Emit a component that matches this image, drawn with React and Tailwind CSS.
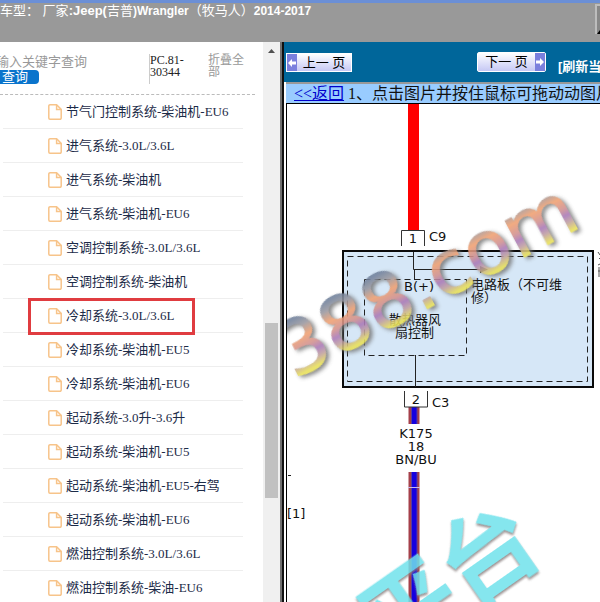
import React from 'react'

const items = [
  '节气门控制系统-柴油机-EU6',
  '进气系统-3.0L/3.6L',
  '进气系统-柴油机',
  '进气系统-柴油机-EU6',
  '空调控制系统-3.0L/3.6L',
  '空调控制系统-柴油机',
  '冷却系统-3.0L/3.6L',
  '冷却系统-柴油机-EU5',
  '冷却系统-柴油机-EU6',
  '起动系统-3.0升-3.6升',
  '起动系统-柴油机-EU5',
  '起动系统-柴油机-EU5-右驾',
  '起动系统-柴油机-EU6',
  '燃油控制系统-3.0L/3.6L',
  '燃油控制系统-柴油-EU6',
]

const selected = '冷却系统-3.0L/3.6L'

function FileIcon() {
  return (
    <svg width="14" height="16" viewBox="0 0 14 16" fill="none" stroke="#f7c48a" strokeWidth="1.5" className="shrink-0">
      <path d="M2 .8h6.600L13.200 5.400V14a1.200 1.200 0 0 1-1.200 1.200H2A1.200 1.200 0 0 1 .8 14V2A1.200 1.200 0 0 1 2 .8z" />
      <path d="M8.600 1v4.600h4.400" />
    </svg>
  )
}

function PageArrow({ left }) {
  return (
    <span className="flex w-[10px] items-center justify-center bg-[#7b80dd]">
      <svg width="8" height="8" viewBox="0 0 8 8" fill="#fff" className={left ? '' : 'rotate-180'}>
        <path d="M0 4l4-4v2.500h4v3H4V8z" />
      </svg>
    </span>
  )
}

function Header() {
  return (
    <header className="flex h-[42px] shrink-0 items-start justify-between border-t-3 border-[#6b8fd6] bg-[#999]">
      <h1 className="pt-px text-[13px] leading-[14px] whitespace-nowrap text-white">
        车型： 厂家<b>:Jeep(</b>吉普<b className="text-[12px]">)Wrangler</b>（牧马人）<b className="text-[12px]">2014-2017</b>
      </h1>
      <button type="button" aria-label="展开" className="mt-px h-[30px] w-[5px] border-t-2 border-l-2 border-[#bdbdbd] bg-[#888]">
        <svg width="3" height="28" viewBox="0 0 3 28">
          <path d="M0 28l3-4v4z" fill="#000" />
        </svg>
      </button>
    </header>
  )
}

function Sidebar() {
  return (
    <aside className="flex w-[284px] shrink-0 bg-white">
      <div className="min-w-0 flex-1 overflow-hidden">
        {/* 搜索栏 */}
        <form className="mr-2 flex h-[53px] items-start border-b border-dashed border-[#bbb] pt-3">
          <div className="w-[149px]">
            <input
              aria-label="输入关键字查询"
              placeholder="输入关键字查询"
              className="-ml-1 block h-4 w-full text-[13px] leading-4 outline-none placeholder:text-[#999]"
            />
            <button type="button" className="block h-[14px] w-[39px] rounded-r bg-[#0a74cc] pr-[11px] text-right text-[13px] leading-[14px] text-white">
              查询
            </button>
          </div>
          <div className="h-[30px] w-[59px] border-l border-[#ccc] font-['Liberation_Serif',serif] text-[12px] leading-[12px] text-[#222]">
            PC.81-
            <br />
            30344
          </div>
          <button type="button" className="w-10 text-left text-[12px] leading-[12px] text-[#999]">
            折叠全部
          </button>
        </form>
        {/* 目录列表 */}
        <ul className="mr-5 ml-[3px] font-['Liberation_Serif','Noto_Sans_CJK_SC',serif]">
          {items.map((item) => (
            <li key={item} className="relative h-[34px] border-b border-[#eee]">
              <a href="#" className="flex h-full items-center gap-1 pl-[45px] text-[13px] whitespace-nowrap text-[#1c2b48]">
                <FileIcon />
                {item}
              </a>
              {item === selected && (
                <span className="absolute -top-px left-[25px] h-[37px] w-[167px] border-3 border-[#e03c40]" />
              )}
            </li>
          ))}
        </ul>
      </div>
      {/* 滚动条 */}
      <div className="flex w-[17px] flex-col items-center bg-[#f0f0f0]">
        <svg width="7" height="4" viewBox="0 0 7 4" fill="#505050" className="mt-[7px]">
          <path d="M0 4L3.500 0 7 4z" />
        </svg>
        <div className="mt-[270px] h-[175px] w-[13px] bg-[#c1c1c1]" />
      </div>
      <div className="w-1 border-r-2 border-[#111] bg-[#707070]" />
    </aside>
  )
}

function Wire({ y, height }) {
  return (
    <g>
      <rect x="121.500" y={y} width="11" height={height} fill="#a5404a" />
      <rect x="124" y={y} width="6.500" height={height} fill="#5a3a9a" />
      <rect x="125" y={y} width="4.500" height={height} fill="#1400e0" />
    </g>
  )
}

function Diagram() {
  return (
    <svg className="block h-full w-full font-['DejaVu_Sans','Noto_Sans_CJK_SC',sans-serif]" fontSize="13" fill="#111">
      <defs>
        <linearGradient id="mark" x1="0" y1="0" x2="0" y2="1">
          <stop offset="0.18" stopColor="#71819b" />
          <stop offset="0.28" stopColor="#9a98a0" />
          <stop offset="0.4" stopColor="#f0a070" />
          <stop offset="0.52" stopColor="#d09090" />
          <stop offset="0.6" stopColor="#a878b8" />
          <stop offset="0.68" stopColor="#c0a0a0" />
          <stop offset="0.78" stopColor="#e8e058" />
        </linearGradient>
      </defs>

      {/* 电源线 */}
      <rect x="121" y="0" width="11" height="126" fill="#f00" />
      <path d="M114.500 142v-15.500h23V142" fill="none" stroke="#333" />
      <text x="126" y="139" textAnchor="middle">1</text>
      <text x="142" y="137">C9</text>

      {/* 电路板 */}
      <rect x="56" y="147" width="250" height="136" fill="#d6e7f7" stroke="#0a0a0a" strokeWidth="2" />
      <rect x="60.500" y="152.500" width="240" height="125" fill="none" stroke="#222" strokeDasharray="6 4" />
      <rect x="77.500" y="175.500" width="102" height="76" fill="none" stroke="#222" strokeDasharray="6 4" />
      <path d="M126.500 148v17.500H200M127.500 165v11M128.500 251v32" fill="none" stroke="#222" />
      <path d="M193 162l8 3.500-8 3.500z" />
      <text x="117" y="187">B(+)</text>
      <text x="102" y="220">散热器风</text>
      <text x="108" y="233">扇控制</text>
      <text x="184" y="185">电路板（不可维</text>
      <text x="184" y="198">修）</text>
      <path d="M311 148l2 3M312 155l1-1M311 161l2-1M311 167h2M312 163v10" stroke="#555" />

      {/* K175 */}
      <Wire y={303} height={17} />
      <path d="M117.500 287v16h23v-16" fill="none" stroke="#333" />
      <text x="129" y="300" textAnchor="middle">2</text>
      <text x="145" y="303">C3</text>
      <text x="129" y="334" textAnchor="middle">K175</text>
      <text x="129" y="347" textAnchor="middle">18</text>
      <text x="129" y="360" textAnchor="middle">BN/BU</text>
      <Wire y={368} height={400} />
      <path d="M121 383.500h12" stroke="#c9b8e8" />
      <path d="M1 371.500h3" stroke="#222" />
      <text x="0" y="414">[1]</text>

      {/* 水印 */}
      <text
        transform="translate(-35 298) rotate(-28)"
        fontSize="75"
        fill="url(#mark)"
        stroke="url(#mark)"
        strokeWidth="1"
        strokeLinejoin="round"
        opacity="0.88"
        className="drop-shadow-[2px_3px_2px_#777]"
      >
        7388.com
      </text>
      <text
        transform="translate(104 560) rotate(-35)"
        fontSize="95"
        fontWeight="bold"
        fill="#70e2ec"
        opacity="0.85"
        className="drop-shadow-[-1px_2px_1px_#8a8080]"
      >
        平台
      </text>
    </svg>
  )
}

export default function App() {
  return (
    <div className="flex h-screen flex-col overflow-hidden bg-white font-['Liberation_Sans','Noto_Sans_CJK_SC',sans-serif]">
      <Header />
      <div className="flex min-h-0 flex-1">
        <Sidebar />
        <main className="flex min-w-0 flex-1 flex-col overflow-hidden">
          <nav className="flex h-10 shrink-0 items-start bg-[#00669a] pt-[10px] pl-[2px] text-[13px] whitespace-nowrap text-black">
            <button type="button" className="mt-px flex h-[19px] w-[66px] shrink-0 border border-white bg-linear-to-b from-white to-[#c6c8f4]">
              <PageArrow left />
              <span className="flex-1 text-[13px] leading-[17px]">上一 页</span>
            </button>
            <button type="button" className="ml-[125px] flex h-5 w-[69px] shrink-0 rounded-xs border border-white bg-linear-to-b from-white to-[#c6c8f4]">
              <span className="flex-1 text-[13px] leading-[17px]">下一 页</span>
              <PageArrow />
            </button>
            <a href="#" className="ml-3 pt-[6px] leading-[18px] font-bold text-white">
              [刷新当前页]
            </a>
          </nav>
          <p className="ml-[2px] h-[21px] shrink-0 border-t-2 border-[#999] bg-[#99ccff] pl-2 font-['Liberation_Serif','Noto_Sans_CJK_SC',serif] text-[16px] leading-[19px] whitespace-nowrap text-[#111]">
            <a href="#" className="text-[#0000cc] underline">&lt;&lt;返回</a> 1、点击图片并按住鼠标可拖动动图片
          </p>
          <div className="ml-[2px] min-h-0 flex-1 border-t border-l border-black bg-white">
            <Diagram />
          </div>
        </main>
      </div>
    </div>
  )
}
